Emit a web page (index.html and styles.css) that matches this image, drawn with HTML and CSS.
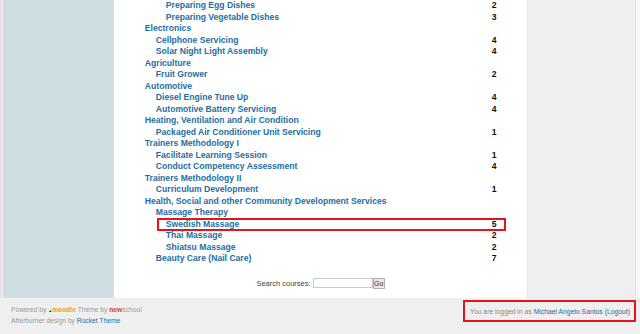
FILE: index.html
```html
<!DOCTYPE html>
<html lang="en">
<head>
    <meta charset="UTF-8">
    <title>Course categories</title>
    <link rel="stylesheet" href="styles.css">
</head>
<body>
    <div class="page">
        <div class="edge-left"></div>
        <div class="side-left"></div>
        <div class="main">
            <div class="courses">
                <div class="row l3"><a href="#">Preparing Egg Dishes</a><span class="count">2</span></div>
                <div class="row l3"><a href="#">Preparing Vegetable Dishes</a><span class="count">3</span></div>
                <div class="row l1"><a href="#">Electronics</a></div>
                <div class="row l2"><a href="#">Cellphone Servicing</a><span class="count">4</span></div>
                <div class="row l2"><a href="#">Solar Night Light Assembly</a><span class="count">4</span></div>
                <div class="row l1"><a href="#">Agriculture</a></div>
                <div class="row l2"><a href="#">Fruit Grower</a><span class="count">2</span></div>
                <div class="row l1"><a href="#">Automotive</a></div>
                <div class="row l2"><a href="#">Diesel Engine Tune Up</a><span class="count">4</span></div>
                <div class="row l2"><a href="#">Automotive Battery Servicing</a><span class="count">4</span></div>
                <div class="row l1"><a href="#">Heating, Ventilation and Air Condition</a></div>
                <div class="row l2"><a href="#">Packaged Air Conditioner Unit Servicing</a><span class="count">1</span></div>
                <div class="row l1"><a href="#">Trainers Methodology I</a></div>
                <div class="row l2"><a href="#">Facilitate Learning Session</a><span class="count">1</span></div>
                <div class="row l2"><a href="#">Conduct Competency Assessment</a><span class="count">4</span></div>
                <div class="row l1"><a href="#">Trainers Methodology II</a></div>
                <div class="row l2"><a href="#">Curriculum Development</a><span class="count">1</span></div>
                <div class="row l1"><a href="#">Health, Social and other Community Development Services</a></div>
                <div class="row l2"><a href="#">Massage Therapy</a></div>
                <div class="row l3 marked"><a href="#">Swedish Massage</a><span class="count">5</span></div>
                <div class="row l3"><a href="#">Thai Massage</a><span class="count">2</span></div>
                <div class="row l3"><a href="#">Shiatsu Massage</a><span class="count">2</span></div>
                <div class="row l2"><a href="#">Beauty Care (Nail Care)</a><span class="count">7</span></div>
            </div>
            <form class="search">
                <label>Search courses:</label>
                <input type="text">
                <button type="button">Go</button>
            </form>
        </div>
        <div class="side-right"></div>
        <div class="edge-right"></div>
    </div>
    <div class="footer">
        <div class="credits">
            <div>Powered by <span class="moodle"><span class="hat">&#9650;</span>moodle</span> Theme by <span class="new">new</span>school</div>
            <div>Afterburner design by <a href="#">Rocket Theme</a></div>
        </div>
        <div class="login">You are logged in as <a href="#">Michael Angelo Santos</a> <a href="#">(Logout)</a></div>
    </div>
</body>
</html>
```

FILE: styles.css
```css
body {
    margin: 0;
    font-family: "Liberation Sans", Arial, sans-serif;
    background-color: #efefef;
    overflow: hidden;
}
a {
    color: #1d6ea6;
    text-decoration: none;
}
.page {
    display: flex;
    height: 298px;
}
.edge-left {
    width: 3px;
    background: linear-gradient(to right, #ead6e2, #f4eef4);
}
.side-left {
    width: 111px;
    background-color: #cfdee3;
}
.main {
    width: 414px;
    background-color: white;
    display: flex;
    flex-direction: column;
}
.side-right {
    width: 107px;
    background-color: #efefef;
    border-left: 1px solid #e4e4e4;
}
.edge-right {
    width: 4px;
    background-color: #f8f8f8;
    border-left: 1px solid #e2e2e2;
}
.courses {
    margin-top: 0;
    padding-left: 31px;
    width: 357px;
}
.row {
    display: flex;
    height: 11.5px;
    line-height: 11.5px;
    font-size: 8.6px;
    font-weight: bold;
    position: relative;
}
.row a {
    flex: 1;
    white-space: nowrap;
}
.row.l2 a {
    padding-left: 11px;
}
.row.l3 a {
    padding-left: 21px;
}
.count {
    width: 10px;
    text-align: left;
    color: #111;
}
.marked::after {
    content: "";
    position: absolute;
    left: 12px;
    right: -4px;
    top: -0.5px;
    height: 9px;
    border: 2px solid #e2151f;
}
.search {
    margin: 13px 0 0;
    display: flex;
    justify-content: center;
    align-items: center;
    font-size: 7.5px;
    color: #444;
}
.search label {
    margin-right: 2px;
}
.search input {
    width: 58px;
    height: 8px;
    padding: 0;
    border: 1px solid #c8c8c8;
    margin: 0;
}
.search button {
    height: 11px;
    width: 12px;
    padding: 0;
    font-size: 7px;
    border: 1px solid #b0b0b0;
    background-color: #e8e8e8;
    font-family: "Liberation Sans", Arial, sans-serif;
    color: #333;
}
.footer {
    display: flex;
    justify-content: space-between;
    align-items: flex-start;
    height: 36px;
    font-size: 6.7px;
    color: #9a9a9a;
}
.credits {
    padding: 7px 0 0 11px;
    line-height: 10px;
}
.moodle {
    color: #f09a1d;
    font-weight: bold;
}
.hat {
    color: #333;
    font-size: 4px;
}
.new {
    color: #d8402a;
    font-weight: bold;
}
.login {
    margin: 2px 4px 0 0;
    border: 2px solid #e2151f;
    padding: 6px 4px 5px 5px;
    color: #888;
    font-size: 6.8px;
}
```
